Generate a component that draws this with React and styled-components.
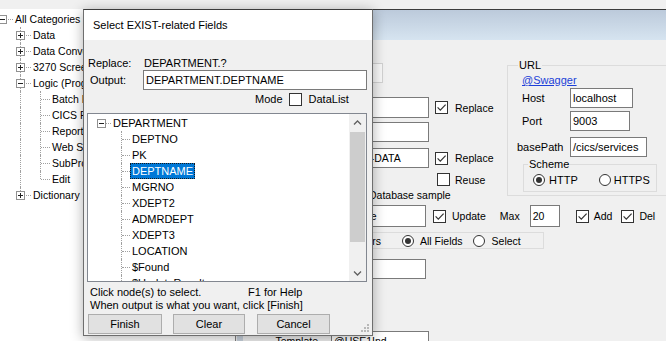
import React from 'react';
import styled, { createGlobalStyle } from 'styled-components';

const GlobalStyle = createGlobalStyle`
  html, body {
    margin: 0;
    padding: 0;
  }
  body {
    background: #f0f0f0;
    font-family: "Liberation Sans", Arial, sans-serif;
    font-size: 11px;
    color: #000;
  }
`;

// ---------- screen frame

const Screen = styled.div`
  position: relative;
  width: 666px;
  height: 341px;
  overflow: hidden;
  background: #f0f0f0;
  display: flex;
  flex-direction: column;
`;

const TopStrip = styled.div`
  height: 9px;
  flex-shrink: 0;
  background: #f0f0f0;
`;

const Workspace = styled.div`
  flex: 1;
  min-height: 0;
  display: flex;
`;

// ---------- shared win controls

const Text = styled.span`
  flex-shrink: 0;
  white-space: nowrap;
  margin-left: ${p => p.$ml || 0}px;
`;

const TextBox = styled.div`
  box-sizing: border-box;
  flex-shrink: 0;
  width: ${p => p.$w}px;
  height: ${p => p.$h || 20}px;
  margin-left: ${p => p.$ml || 0}px;
  padding: 0 2px;
  background: #fff;
  border: 1px solid #7a7a7a;
  display: flex;
  align-items: center;
  white-space: nowrap;
  overflow: hidden;
`;

const CheckSquare = styled.span`
  box-sizing: border-box;
  flex-shrink: 0;
  width: 13px;
  height: 13px;
  margin-left: ${p => p.$ml || 0}px;
  border: 1px solid #333;
  background: #fff;
  display: flex;
  align-items: center;
  justify-content: center;
`;

const CheckBox = ({ checked, ml }) => (
  <CheckSquare $ml={ml}>
    {checked && (
      <svg width="11" height="11" viewBox="0 0 11 11">
        <path d="M1.6 5.4 L4.3 8.1 L9.6 2.6" fill="none" stroke="#333" strokeWidth="1.2" />
      </svg>
    )}
  </CheckSquare>
);

const Radio = styled.span`
  box-sizing: border-box;
  flex-shrink: 0;
  width: 12px;
  height: 12px;
  margin-left: ${p => p.$ml || 0}px;
  border: 1px solid #333;
  border-radius: 50%;
  background: #fff;
  display: flex;
  align-items: center;
  justify-content: center;

  &::after {
    content: '';
    display: ${p => (p.$checked ? 'block' : 'none')};
    width: 6px;
    height: 6px;
    border-radius: 50%;
    background: #333;
  }
`;

const WinButton = styled.div`
  box-sizing: border-box;
  flex-shrink: 0;
  width: ${p => p.$w}px;
  height: 20px;
  margin-left: ${p => p.$ml || 0}px;
  background: ${p => (p.$faint ? '#f8f8f8' : '#e1e1e1')};
  border: 1px solid ${p => (p.$faint ? '#d2d2d2' : '#adadad')};
  display: flex;
  align-items: center;
  justify-content: center;
`;

// ---------- tree pieces

const TreeRow = styled.div`
  display: flex;
  align-items: center;
  height: 16px;
  flex-shrink: 0;
  white-space: nowrap;
`;

const Gap = styled.span`
  flex-shrink: 0;
  width: ${p => p.$w}px;
`;

const Cell = styled.span`
  position: relative;
  flex-shrink: 0;
  width: ${p => p.$w}px;
  height: 16px;
  margin-left: ${p => p.$ml || 0}px;
  display: flex;
  align-items: center;

  &::before {
    content: '';
    display: ${p => (p.$v ? 'block' : 'none')};
    position: absolute;
    left: 4px;
    top: 0;
    height: ${p => (p.$v === 'top' ? 8 : 16)}px;
    border-left: 1px dotted #a0a0a0;
  }

  &::after {
    content: '';
    display: ${p => (p.$tail ? 'block' : 'none')};
    position: absolute;
    left: 5px;
    right: 0;
    top: 8px;
    border-top: 1px dotted #a0a0a0;
  }
`;

const Expander = styled.span`
  position: relative;
  z-index: 1;
  box-sizing: border-box;
  flex-shrink: 0;
  width: 9px;
  height: 9px;
  border: 1px solid #919191;
  background: #fff;

  &::before {
    content: '';
    position: absolute;
    left: 1px;
    top: 3px;
    width: 5px;
    height: 1px;
    background: #222;
  }

  &::after {
    content: '';
    display: ${p => (p.$open ? 'none' : 'block')};
    position: absolute;
    left: 3px;
    top: 1px;
    width: 1px;
    height: 5px;
    background: #222;
  }
`;

const NodeLabel = styled.span`
  height: 16px;
  line-height: 16px;
  padding: 0 2px;
  box-sizing: border-box;
  background: ${p => (p.$selected ? '#0078d7' : 'transparent')};
  color: ${p => (p.$selected ? '#fff' : '#000')};
  outline: ${p => (p.$selected ? '1px dotted #1a1a1a' : 'none')};
  outline-offset: -1px;
`;

// ---------- left category tree

const TreePanel = styled.div`
  box-sizing: border-box;
  width: 236px;
  flex-shrink: 0;
  padding-top: 2px;
  background: #fff;
  border-right: 1px solid #828282;
  font-size: 10.5px;
  overflow: hidden;
`;

const categories = [
  { level: 0, label: 'All Categories', open: true },
  { level: 1, label: 'Data' },
  { level: 1, label: 'Data Conversion' },
  { level: 1, label: '3270 Screen' },
  { level: 1, label: 'Logic (Program)', open: true },
  { level: 2, label: 'Batch Program' },
  { level: 2, label: 'CICS Program' },
  { level: 2, label: 'Report Program' },
  { level: 2, label: 'Web Service' },
  { level: 2, label: 'SubProgram' },
  { level: 2, label: 'Edit', last: true },
  { level: 1, label: 'Dictionary', last: true },
];

const CategoryRow = ({ node }) => {
  if (node.level === 0) {
    return (
      <TreeRow>
        <Cell $w={15} $ml={-2} $tail>
          <Expander $open />
        </Cell>
        <NodeLabel>{node.label}</NodeLabel>
      </TreeRow>
    );
  }
  if (node.level === 1) {
    return (
      <TreeRow>
        <Gap $w={16} />
        <Cell $w={15} $v={node.last ? 'top' : 'full'} $tail>
          <Expander $open={node.open} />
        </Cell>
        <NodeLabel>{node.label}</NodeLabel>
      </TreeRow>
    );
  }
  return (
    <TreeRow>
      <Gap $w={16} />
      <Cell $w={20} $v="full" />
      <Cell $w={14} $v={node.last ? 'top' : 'full'} $tail />
      <NodeLabel>{node.label}</NodeLabel>
    </TreeRow>
  );
};

// ---------- main (background) window

const MainWindow = styled.div`
  flex: 1;
  min-width: 0;
  display: flex;
  flex-direction: column;
  border-top: 1px solid #3c3c3c;
`;

const Caption = styled.div`
  height: 30px;
  flex-shrink: 0;
  background: linear-gradient(#bccadb, #d6e4f0);
`;

const MainBody = styled.div`
  flex: 1;
  display: flex;
  font-size: 10.5px;
`;

const SideStrip = styled.div`
  width: 6px;
  margin-left: 1px;
  flex-shrink: 0;
  background: #c8d2dd;
`;

const FormArea = styled.div`
  flex: 1;
  display: flex;
  flex-direction: column;
`;

const TopSection = styled.div`
  display: flex;
  height: 161px;
  flex-shrink: 0;
`;

const FormTop = styled.div`
  width: 264px;
  flex-shrink: 0;
  display: flex;
  flex-direction: column;
`;

const FormRow = styled.div`
  display: flex;
  align-items: center;
  flex-shrink: 0;
  height: ${p => p.$h}px;
  margin-top: ${p => p.$mt || 0}px;
`;

const FieldLabel = styled.span`
  box-sizing: border-box;
  flex-shrink: 0;
  width: 88px;
  padding-right: 13px;
  text-align: right;
  white-space: nowrap;
`;

const RadioStrip = styled.div`
  box-sizing: border-box;
  display: flex;
  align-items: center;
  width: 251px;
  height: 17px;
  margin-left: 50px;
  border: 1px solid #dcdcdc;
`;

const StripLabel = styled.span`
  width: 87px;
  flex-shrink: 0;
  text-align: right;
`;

const GroupBox = styled.div`
  position: relative;
  box-sizing: border-box;
  flex-shrink: 0;
  border: 1px solid #dcdcdc;
`;

const Legend = styled.span`
  position: absolute;
  top: -7px;
  left: ${p => p.$left}px;
  padding: 0 1px;
  line-height: 13px;
  background: #f0f0f0;
  white-space: nowrap;
`;

const UrlGroup = styled(GroupBox)`
  width: 180px;
  height: 131px;
  margin-top: 25px;
  padding-left: 14px;
  display: flex;
  flex-direction: column;
  font-size: 11px;
`;

const SwaggerLink = styled.span`
  margin-top: 8px;
  height: 13px;
  line-height: 13px;
  color: #1c3fd8;
  text-decoration: underline;
`;

const UrlLabel = styled.span`
  flex-shrink: 0;
  width: ${p => p.$w || 48}px;
  margin-left: ${p => p.$ml || 0}px;
  white-space: nowrap;
`;

const SchemeGroup = styled(GroupBox)`
  width: 134px;
  height: 28px;
  margin-top: 7px;
  margin-left: 1px;
  padding: 4px 0 0 9px;
  display: flex;
  align-items: center;
`;

// ---------- dialog

const Dialog = styled.div`
  position: absolute;
  left: 83px;
  top: 9px;
  width: 290px;
  height: 327px;
  box-sizing: border-box;
  display: flex;
  flex-direction: column;
  background: #f0f0f0;
  border: 1px solid #6e6e6e;
  border-top-color: #3c3c3c;
  box-shadow: 0 2px 12px rgba(0, 0, 0, 0.32);
  font-size: 11px;
`;

const TitleBar = styled.div`
  height: 30px;
  flex-shrink: 0;
  padding-left: 9px;
  background: #fff;
  display: flex;
  align-items: center;
`;

const DialogBody = styled.div`
  flex: 1;
  display: flex;
  flex-direction: column;
`;

const DRow = styled.div`
  display: flex;
  align-items: center;
  flex-shrink: 0;
  height: ${p => p.$h}px;
  margin-top: ${p => p.$mt || 0}px;
  padding-left: ${p => p.$pl || 0}px;
  white-space: nowrap;
`;

const DLabel = styled.span`
  flex-shrink: 0;
  width: ${p => p.$w}px;
`;

const FieldTree = styled.div`
  box-sizing: border-box;
  flex-shrink: 0;
  width: 280px;
  height: 169px;
  margin: 7px 0 0 3px;
  background: #fff;
  border: 1px solid #828790;
  display: flex;
`;

const FieldList = styled.div`
  flex: 1;
  padding-top: 1px;
  overflow: hidden;
  display: flex;
  flex-direction: column;
`;

const ScrollBar = styled.div`
  width: 17px;
  flex-shrink: 0;
  background: #f0f0f0;
  display: flex;
  flex-direction: column;
`;

const ScrollButton = styled.div`
  height: 17px;
  flex-shrink: 0;
  display: flex;
  align-items: center;
  justify-content: center;
  margin-top: ${p => (p.$bottom ? 'auto' : '0')};
`;

const Thumb = styled.div`
  height: 110px;
  margin: 1px 1px 0;
  background: #cdcdcd;
`;

const Chevron = ({ down }) => (
  <svg width="9" height="6" viewBox="0 0 9 6">
    <polyline
      points={down ? '1,1.5 4.5,5 8,1.5' : '1,4.5 4.5,1 8,4.5'}
      fill="none"
      stroke="#606060"
      strokeWidth="1.3"
    />
  </svg>
);

const Grip = styled.svg`
  position: absolute;
  right: 2px;
  bottom: 2px;
`;

const fields = [
  'DEPTNO',
  'PK',
  'DEPTNAME',
  'MGRNO',
  'XDEPT2',
  'ADMRDEPT',
  'XDEPT3',
  'LOCATION',
  '$Found',
  '$UpdateResult',
];

const App = () => (
  <>
    <GlobalStyle />
    <Screen>
      <TopStrip />
      <Workspace>
        <TreePanel>
          {categories.map(node => (
            <CategoryRow key={node.label} node={node} />
          ))}
        </TreePanel>

        <MainWindow>
          <Caption />
          <MainBody>
            <SideStrip />
            <FormArea>
              <TopSection>
                <FormTop>
                  <FormRow $mt={23} $h={20}>
                    <FieldLabel>Table</FieldLabel>
                    <WinButton $w={52} $faint>...</WinButton>
                  </FormRow>
                  <FormRow $mt={14} $h={21}>
                    <FieldLabel>Program</FieldLabel>
                    <TextBox $w={98} $h={21}>DEPTS</TextBox>
                    <CheckBox checked ml={6} />
                    <Text $ml={7}>Replace</Text>
                  </FormRow>
                  <FormRow $mt={4} $h={20}>
                    <FieldLabel>Transaction</FieldLabel>
                    <TextBox $w={98}>DSEL</TextBox>
                  </FormRow>
                  <FormRow $mt={6} $h={20}>
                    <FieldLabel>Record</FieldLabel>
                    <TextBox $w={98}>DEPTM-DATA</TextBox>
                    <CheckBox checked ml={6} />
                    <Text $ml={7}>Replace</Text>
                  </FormRow>
                  <FormRow $mt={4} $h={15}>
                    <Gap $w={194} />
                    <CheckBox ml={0} />
                    <Text $ml={5}>Reuse</Text>
                  </FormRow>
                  <FormRow $mt={1} $h={13}>
                    <Text $ml={126}>Database sample</Text>
                  </FormRow>
                </FormTop>

                <UrlGroup>
                  <Legend $left={10}>URL</Legend>
                  <SwaggerLink>@Swagger</SwaggerLink>
                  <FormRow $mt={1} $h={20}>
                    <UrlLabel>Host</UrlLabel>
                    <TextBox $w={63}>localhost</TextBox>
                  </FormRow>
                  <FormRow $mt={3} $h={20}>
                    <UrlLabel>Port</UrlLabel>
                    <TextBox $w={60}>9003</TextBox>
                  </FormRow>
                  <FormRow $mt={6} $h={20}>
                    <UrlLabel $w={53} $ml={-5}>basePath</UrlLabel>
                    <TextBox $w={77}>/cics/services</TextBox>
                  </FormRow>
                  <SchemeGroup>
                    <Legend $left={4}>Scheme</Legend>
                    <Radio $checked />
                    <Text $ml={4}>HTTP</Text>
                    <Radio $ml={21} />
                    <Text $ml={3}>HTTPS</Text>
                  </SchemeGroup>
                </UrlGroup>
              </TopSection>

              <FormRow $mt={4} $h={22}>
                <FieldLabel>Access</FieldLabel>
                <TextBox $w={95} $h={22}>Template</TextBox>
                <CheckBox checked ml={7} />
                <Text $ml={6}>Update</Text>
                <Text $ml={14}>Max</Text>
                <TextBox $w={30} $h={22} $ml={10}>20</TextBox>
                <CheckBox checked ml={16} />
                <Text $ml={5}>Add</Text>
                <CheckBox checked ml={9} />
                <Text $ml={5}>Del</Text>
              </FormRow>
              <FormRow $mt={5} $h={17}>
                <RadioStrip>
                  <StripLabel>Filters</StripLabel>
                  <Radio $checked $ml={21} />
                  <Text $ml={6}>All Fields</Text>
                  <Radio $ml={10} />
                  <Text $ml={7}>Select</Text>
                </RadioStrip>
              </FormRow>
              <FormRow $mt={10} $h={20}>
                <FieldLabel>Key</FieldLabel>
                <TextBox $w={95} />
              </FormRow>
              <FormRow $mt={52} $h={20}>
                <FieldLabel>Template</FieldLabel>
                <TextBox $w={98}>@USE1Ind</TextBox>
              </FormRow>
            </FormArea>
          </MainBody>
        </MainWindow>
      </Workspace>

      <Dialog>
        <TitleBar>Select EXIST-related Fields</TitleBar>
        <DialogBody>
          <DRow $mt={17} $h={12} $pl={4}>
            <DLabel $w={56}>Replace:</DLabel>
            <span>DEPARTMENT.?</span>
          </DRow>
          <DRow $mt={1} $h={20} $pl={6}>
            <DLabel $w={53}>Output:</DLabel>
            <TextBox $w={224}>DEPARTMENT.DEPTNAME</TextBox>
          </DRow>
          <DRow $mt={2} $h={14} $pl={171}>
            <span>Mode</span>
            <CheckBox ml={6} />
            <Text $ml={7}>DataList</Text>
          </DRow>

          <FieldTree>
            <FieldList>
              <TreeRow>
                <Gap $w={9} />
                <Cell $w={14} $tail>
                  <Expander $open />
                </Cell>
                <NodeLabel>DEPARTMENT</NodeLabel>
              </TreeRow>
              {fields.map(name => (
                <TreeRow key={name}>
                  <Gap $w={29} />
                  <Cell $w={13} $v="full" $tail />
                  <NodeLabel $selected={name === 'DEPTNAME'}>{name}</NodeLabel>
                </TreeRow>
              ))}
            </FieldList>
            <ScrollBar>
              <ScrollButton>
                <Chevron />
              </ScrollButton>
              <Thumb />
              <ScrollButton $bottom>
                <Chevron down />
              </ScrollButton>
            </ScrollBar>
          </FieldTree>

          <DRow $mt={3} $h={13} $pl={6}>
            <DLabel $w={158}>Click node(s) to select.</DLabel>
            <span>F1 for Help</span>
          </DRow>
          <DRow $h={13} $pl={6}>
            When output is what you want, click [Finish]
          </DRow>
          <DRow $mt={3} $h={20} $pl={4}>
            <WinButton $w={74}>Finish</WinButton>
            <WinButton $w={72} $ml={11}>Clear</WinButton>
            <WinButton $w={73} $ml={12}>Cancel</WinButton>
          </DRow>
        </DialogBody>
        <Grip width="10" height="10" viewBox="0 0 10 10">
          {[[8, 2], [8, 5], [5, 5], [8, 8], [5, 8], [2, 8]].map(([x, y]) => (
            <rect key={`${x}-${y}`} x={x - 1} y={y - 1} width="2" height="2" fill="#b8b8b8" />
          ))}
        </Grip>
      </Dialog>
    </Screen>
  </>
);

export default App;
